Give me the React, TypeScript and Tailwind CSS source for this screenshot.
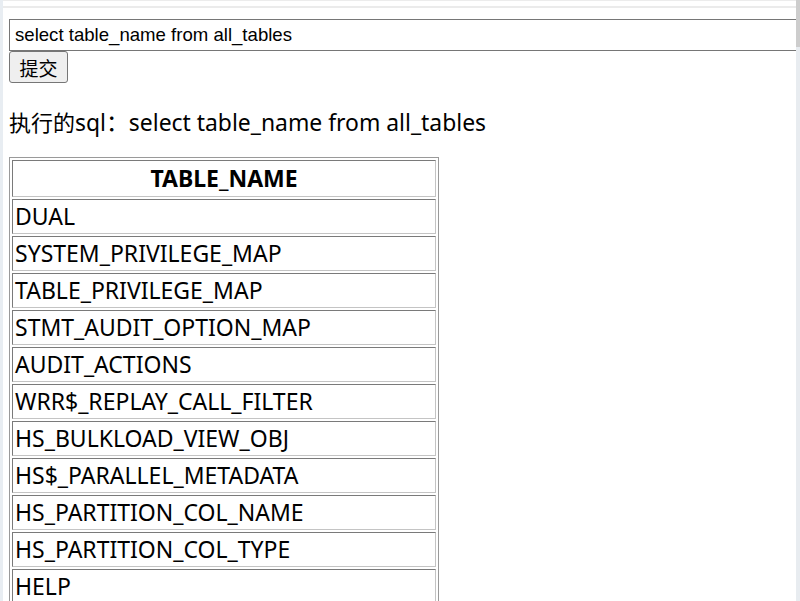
const tables = [
  'DUAL',
  'SYSTEM_PRIVILEGE_MAP',
  'TABLE_PRIVILEGE_MAP',
  'STMT_AUDIT_OPTION_MAP',
  'AUDIT_ACTIONS',
  'WRR$_REPLAY_CALL_FILTER',
  'HS_BULKLOAD_VIEW_OBJ',
  'HS$_PARALLEL_METADATA',
  'HS_PARTITION_COL_NAME',
  'HS_PARTITION_COL_TYPE',
  'HELP',
];

const sql = 'select table_name from all_tables';

export default function App() {
  return (
    <div className="flex w-[800px] h-[601px] overflow-hidden bg-white text-black">
      {/* left window edge */}
      <div className="w-[3px] shrink-0 bg-[#e8edf2]" />

      <div className="flex-1 min-w-0 flex flex-col overflow-hidden">
        {/* top edge */}
        <div className="h-px shrink-0 bg-[#ececec]" />
        <div className="h-[5px] shrink-0" />
        <div className="h-[2px] shrink-0 bg-[#ebebeb]" />

        <div className="pl-[6px] pt-[11px]">
          <form className="flex flex-col items-start" onSubmit={(e) => e.preventDefault()}>
            <input
              defaultValue={sql}
              className="w-[820px] h-[32px] border border-[#767676] px-[5px] text-[18.6px] font-['Liberation_Sans',Arial,sans-serif] outline-none"
            />
            <button
              type="submit"
              className="h-[32px] w-[59px] rounded-[3px] border border-[#767676] bg-[#efefef] text-[19px] leading-none font-['Noto_Sans_CJK_SC',sans-serif]"
            >
              提交
            </button>
          </form>

          <p className="mt-[24px] text-[22.9px] leading-[28px] font-['Noto_Sans','Noto_Sans_CJK_SC',sans-serif]">
            <span className="text-[22px] font-['Noto_Sans_CJK_SC',sans-serif]">执行的</span>sql：{sql}
          </p>

          <table className="mt-[20px] w-[430px] border border-[#9a9a9a] border-separate border-spacing-[2px] font-['Noto_Sans',sans-serif] text-[23px]">
            <thead>
              <tr>
                <th className="h-[37px] border border-[#7a7a7a] border-r-[#c4c4c4] border-b-[#c4c4c4] px-px font-bold leading-none">
                  TABLE_NAME
                </th>
              </tr>
            </thead>
            <tbody>
              {tables.map((t) => (
                <tr key={t}>
                  <td className="h-[35px] border border-[#7a7a7a] border-r-[#c4c4c4] border-b-[#c4c4c4] px-[2px] leading-none">
                    {t}
                  </td>
                </tr>
              ))}
            </tbody>
          </table>
        </div>
      </div>

      {/* scrollbar */}
      <div className="w-[4px] shrink-0 flex flex-col">
        <div className="h-[47px] bg-[#cdcdcd]" />
        <div className="flex-1 bg-[#e8ecf0]" />
      </div>
    </div>
  );
}
